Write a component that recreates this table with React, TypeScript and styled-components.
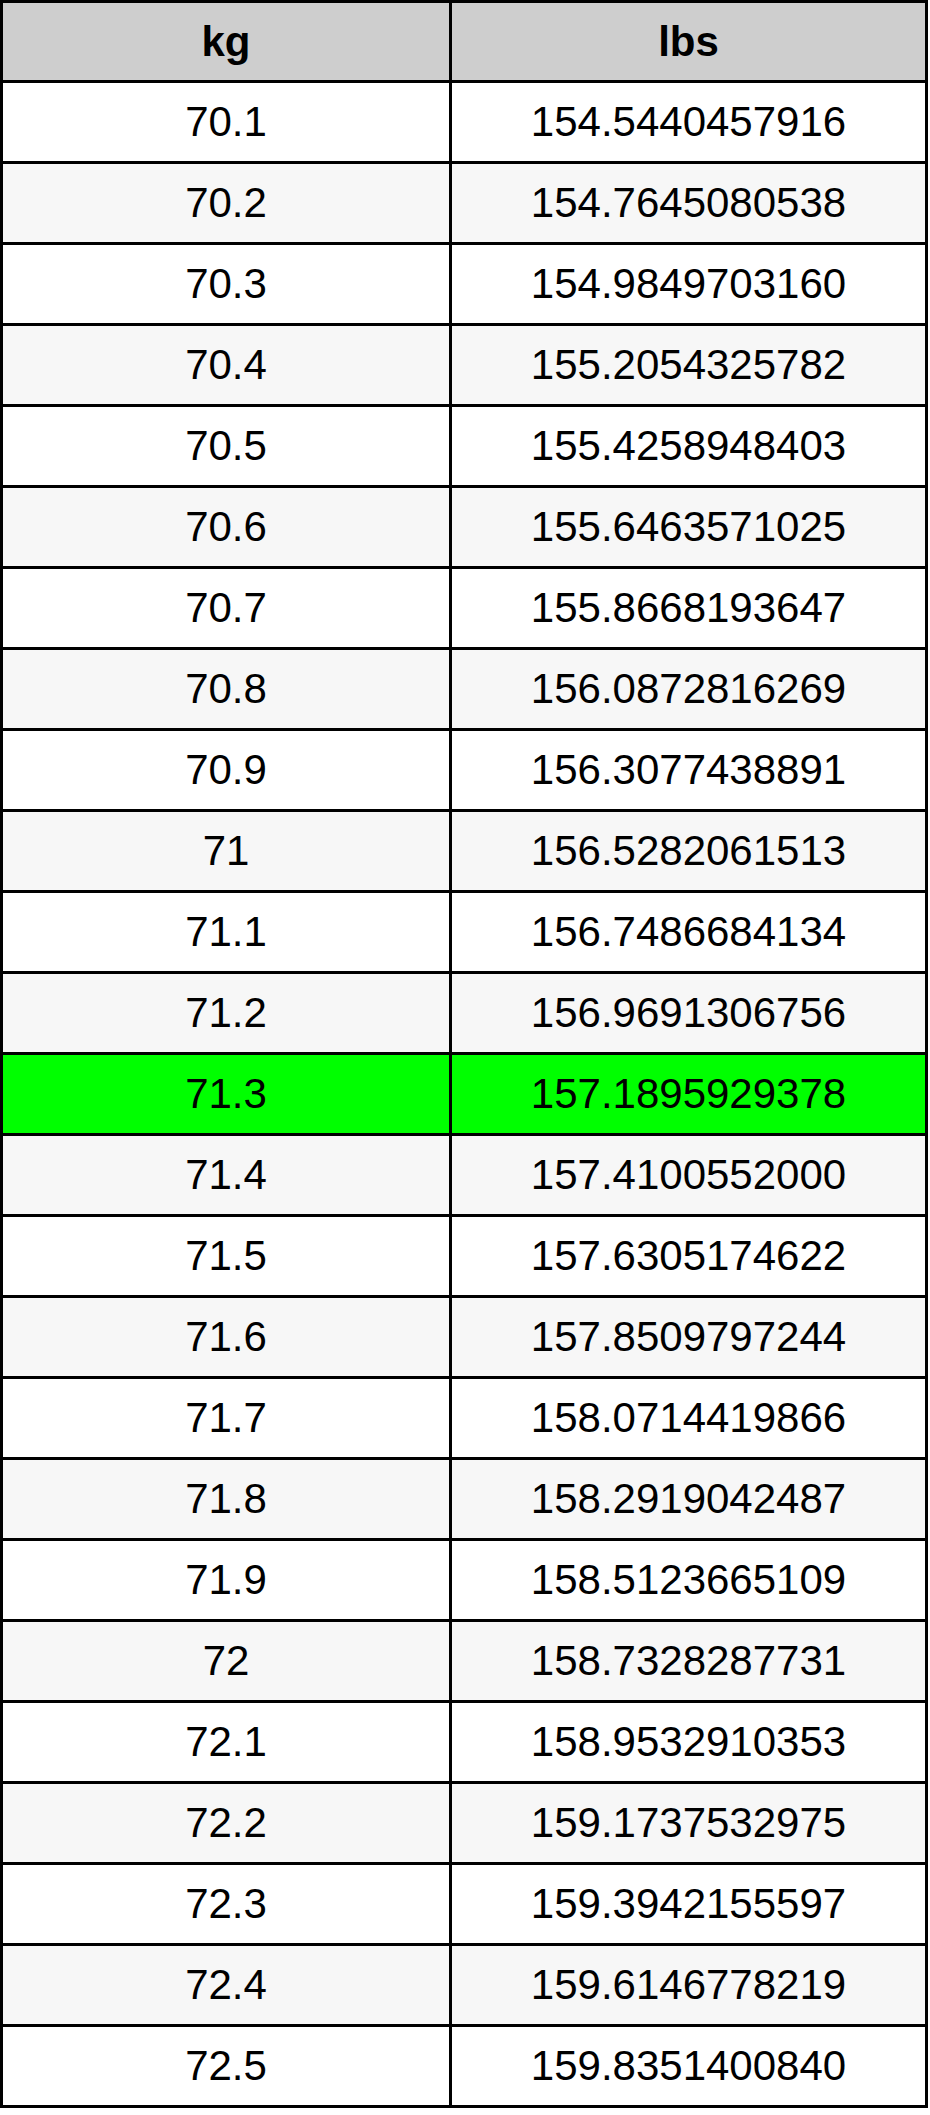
import React from "react";
import styled, { createGlobalStyle } from "styled-components";

const GlobalStyle = createGlobalStyle`
  html, body {
    margin: 0;
    padding: 0;
    background: #ffffff;
  }
  body {
    font-family: "Liberation Sans", Arial, sans-serif;
  }
`;

const Table = styled.table`
  width: 928px;
  border-collapse: collapse;
  border: 3px solid #000;
  font-family: "Liberation Sans", Arial, sans-serif;
  font-size: 42px;
  color: #000;
`;

const HeadCell = styled.th<{ $width?: number }>`
  width: ${(p) => (p.$width ? `${p.$width}px` : "auto")};
  height: 77px;
  padding: 0;
  border: 3px solid #000;
  background: #cecece;
  font-weight: bold;
  text-align: center;
  vertical-align: middle;
`;

const Row = styled.tr<{ $striped: boolean; $active: boolean }>`
  background: ${(p) => (p.$active ? "#00ff00" : p.$striped ? "#f7f7f7" : "#ffffff")};
`;

const Cell = styled.td`
  height: 78px;
  padding: 0;
  border: 3px solid #000;
  text-align: center;
  vertical-align: middle;
`;

const RATE = 2.20462262185;

const rows = [
  ["70.1", "154.5440457916"],
  ["70.2", "154.7645080538"],
  ["70.3", "154.9849703160"],
  ["70.4", "155.2054325782"],
  ["70.5", "155.4258948403"],
  ["70.6", "155.6463571025"],
  ["70.7", "155.8668193647"],
  ["70.8", "156.0872816269"],
  ["70.9", "156.3077438891"],
  ["71", "156.5282061513"],
  ["71.1", "156.7486684134"],
  ["71.2", "156.9691306756"],
  ["71.3", "157.1895929378"],
  ["71.4", "157.4100552000"],
  ["71.5", "157.6305174622"],
  ["71.6", "157.8509797244"],
  ["71.7", "158.0714419866"],
  ["71.8", "158.2919042487"],
  ["71.9", "158.5123665109"],
  ["72", "158.7328287731"],
  ["72.1", "158.9532910353"],
  ["72.2", "159.1737532975"],
  ["72.3", "159.3942155597"],
  ["72.4", "159.6146778219"],
  ["72.5", "159.8351400840"],
];

const ACTIVE = "71.3";

export default function App() {
  void RATE;
  return (
    <>
      <GlobalStyle />
      <Table>
        <thead>
          <tr>
            <HeadCell $width={446}>kg</HeadCell>
            <HeadCell>lbs</HeadCell>
          </tr>
        </thead>
        <tbody>
          {rows.map(([kg, lbs], i) => (
            <Row key={kg} $striped={i % 2 === 1} $active={kg === ACTIVE}>
              <Cell>{kg}</Cell>
              <Cell>{lbs}</Cell>
            </Row>
          ))}
        </tbody>
      </Table>
    </>
  );
}
